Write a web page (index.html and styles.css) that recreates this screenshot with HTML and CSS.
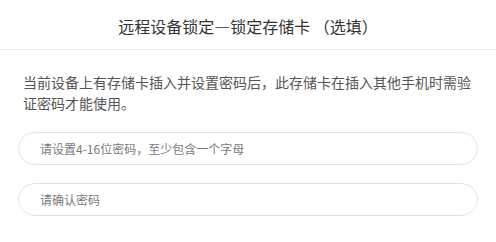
FILE: index.html
```html
<!DOCTYPE html>
<html lang="zh">
<head>
<meta charset="utf-8">
<link rel="stylesheet" href="styles.css">
</head>
<body>
<div class="page">
  <header class="header">
    <h1 class="title">远程设备锁定—锁定存储卡 （选填）</h1>
  </header>
  <section class="content">
    <p class="desc">当前设备上有存储卡插入并设置密码后，此存储卡在插入其他手机时需验证密码才能使用。</p>
    <div class="field"><span class="placeholder">请设置4-16位密码，至少包含一个字母</span></div>
    <div class="field"><span class="placeholder">请确认密码</span></div>
  </section>
</div>
</body>
</html>
```
FILE: styles.css
```css
html, body {
  margin: 0;
  padding: 0;
  background: #ffffff;
}
body {
  font-family: "Noto Sans CJK SC", "Microsoft YaHei", sans-serif;
  width: 496px;
  height: 242px;
  overflow: hidden;
}
.header {
  height: 49px;
  border-bottom: 1px solid #ededed;
  display: flex;
  align-items: center;
  justify-content: center;
}
.title {
  margin: 0;
  font-size: 16px;
  font-weight: normal;
  color: #333333;
  line-height: 20px;
  padding-top: 2px;
}
.content {
  padding: 22px 18px 0 18px;
}
.desc {
  margin: 0 5px 18px 5px;
  font-size: 14px;
  line-height: 21px;
  color: #555555;
}
.field {
  height: 31px;
  border: 1px solid #e2e2e2;
  border-radius: 17px;
  display: flex;
  align-items: center;
  padding-left: 21px;
  margin-bottom: 18px;
}
.placeholder {
  font-size: 12px;
  color: #7a7a7a;
  line-height: 16px;
}
```
